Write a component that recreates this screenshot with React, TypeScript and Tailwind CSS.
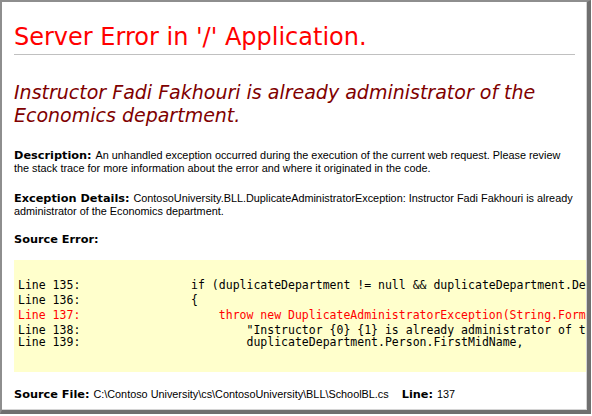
import React from 'react'

const codeLines = [
  { n: 135, text: '                if (duplicateDepartment != null && duplicateDepartment.DepartmentID != department.DepartmentID)', red: false, h: 'h-[15px]' },
  { n: 136, text: '                {', red: false, h: 'h-[15px]' },
  { n: 137, text: '                    throw new DuplicateAdministratorException(String.Format(', red: true, h: 'h-[15px]' },
  { n: 138, text: '                        "Instructor {0} {1} is already administrator of the {2} department.",', red: false, h: 'h-[12px]' },
  { n: 139, text: '                        duplicateDepartment.Person.FirstMidName,', red: false, h: 'h-[15px]' },
]

export default function App() {
  return (
    <div className="w-[592px] h-[416px] bg-white overflow-hidden">
      <div className="w-[591px] h-[414px] border-l-2 border-t-2 border-[#8e8e8e] border-r-[4px] border-b-[4px] border-r-[#6f6f6f] border-b-[#6f6f6f] overflow-hidden">
        <div className="w-full h-full border-r border-b border-[#d4d4d4] overflow-hidden pl-[12px] pr-[11px] text-black">
          <h1 className="mt-[20px] text-[24px] leading-[30px] text-[#ff0000] font-['DejaVu_Sans',Verdana,sans-serif] whitespace-nowrap">
            Server Error in '/' Application.
          </h1>
          <div className="mt-[2px] h-px bg-[#c0c0c0]" />
          <h2 className="mt-[26px] text-[19px] leading-[23px] italic text-[#800000] font-['DejaVu_Sans',Verdana,sans-serif]">
            Instructor Fadi Fakhouri is already administrator of the Economics department.
          </h2>

          <div className="mt-[22px] text-[10.85px] leading-[13px] font-['Liberation_Sans',Arial,sans-serif]">
            <b className="font-['DejaVu_Sans',Verdana,sans-serif] font-bold text-[11.3px]">Description: </b>
            An unhandled exception occurred during the execution of the current web request. Please review the stack trace for more information about the error and where it originated in the code.
          </div>

          <div className="mt-[17px] text-[10.85px] leading-[13px] font-['Liberation_Sans',Arial,sans-serif]">
            <b className="font-['DejaVu_Sans',Verdana,sans-serif] font-bold text-[11.3px]">Exception Details: </b>
            ContosoUniversity.BLL.DuplicateAdministratorException: Instructor Fadi Fakhouri is already administrator of the Economics department.
          </div>

          <div className="mt-[15px] text-[11.3px] leading-[13px] font-bold font-['DejaVu_Sans',Verdana,sans-serif]">
            Source Error:
          </div>

          <div className="mt-[14px] -mr-[20px] h-[112px] bg-[#ffffcc] pl-[4px] pt-[18px] overflow-hidden font-['DejaVu_Sans_Mono','Lucida_Console',monospace] text-[11.5px] leading-[15px] whitespace-pre">
            {codeLines.map((l) => (
              <div key={l.n} className={`${l.h} ${l.red ? 'text-[#ff0000]' : 'text-black'}`}>
                {`Line ${l.n}:${l.text}`}
              </div>
            ))}
          </div>

          <div className="mt-[16px] text-[10.85px] leading-[13px] font-['Liberation_Sans',Arial,sans-serif] whitespace-nowrap">
            <b className="font-['DejaVu_Sans',Verdana,sans-serif] font-bold text-[11.3px]">Source File: </b>
            C:\Contoso University\cs\ContosoUniversity\BLL\SchoolBL.cs
            <b className="ml-[13px] font-['DejaVu_Sans',Verdana,sans-serif] font-bold text-[11.3px]">Line: </b>
            137
          </div>
        </div>
      </div>
    </div>
  )
}
